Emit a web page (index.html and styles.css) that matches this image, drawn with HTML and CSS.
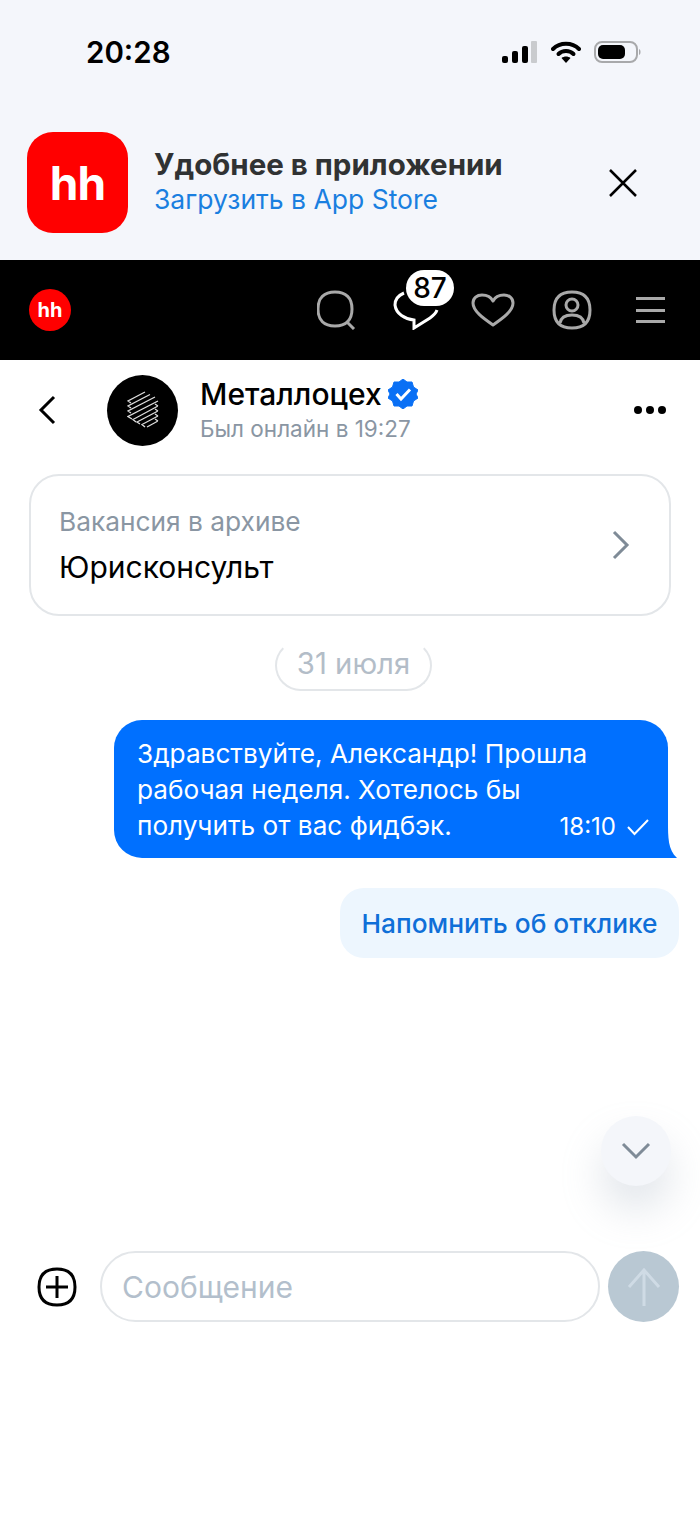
FILE: index.html
```html
<!DOCTYPE html>
<html lang="ru">
<head>
    <meta charset="UTF-8">
    <meta name="viewport" content="width=device-width, initial-scale=1.0">
    <title>Чат</title>
    <link rel="stylesheet" href="styles.css">
</head>
<body>
    <!-- Статус-бар и баннер приложения -->
    <div class="top-area">
        <div class="status-bar">
            <span class="status-time">20:28</span>
            <div class="status-icons">
                <svg width="36" height="22" viewBox="0 0 36 22">
                    <rect x="0" y="15" width="6" height="7" rx="2" fill="#000"/>
                    <rect x="10" y="10" width="6" height="12" rx="2" fill="#000"/>
                    <rect x="20" y="5" width="6" height="17" rx="2" fill="#000"/>
                    <rect x="29" y="0" width="6" height="22" rx="1" fill="#c9cbce"/>
                </svg>
                <svg width="30" height="22" viewBox="0 0 30 22">
                    <path d="M2 8 C9 1 21 1 28 8" fill="none" stroke="#000" stroke-width="4" stroke-linecap="round"/>
                    <path d="M7.500 13 C11.500 9 18.500 9 22.500 13" fill="none" stroke="#000" stroke-width="4" stroke-linecap="round"/>
                    <path d="M10.500 17 C13 15 17 15 19.500 17 L15 22 Z" fill="#000"/>
                </svg>
                <svg width="48" height="22" viewBox="0 0 48 22">
                    <rect x="1" y="1" width="42" height="20" rx="7" fill="none" stroke="#a8a9ab" stroke-width="2"/>
                    <rect x="4" y="4" width="27" height="14" rx="5" fill="#000"/>
                    <path d="M45 8 C47 8.500 47 13.500 45 14 Z" fill="#a8a9ab"/>
                </svg>
            </div>
        </div>

        <div class="app-banner">
            <div class="app-icon">hh</div>
            <div class="app-text">
                <div class="app-title">Удобнее в приложении</div>
                <div class="app-link">Загрузить в App Store</div>
            </div>
            <svg class="app-close" width="30" height="30" viewBox="0 0 30 30">
                <path d="M2 2 L28 28 M28 2 L2 28" stroke="#000" stroke-width="2.500" fill="none"/>
            </svg>
        </div>
    </div>

    <!-- Чёрная навигация сайта -->
    <nav class="site-nav">
        <div class="site-logo">hh</div>
        <div class="nav-icons">
            <svg class="nav-search" width="40" height="40" viewBox="0 0 40 40">
                <path d="M18 2 C29 2 35 8 35 19 C35 30 29 36 18 36 C7 36 1 30 1 19 C1 8 7 2 18 2 Z M29 31 L37 39" fill="none" stroke="#a9a9a9" stroke-width="3"/>
            </svg>
            <div class="nav-chat">
                <svg width="48" height="40" viewBox="0 0 48 40">
                    <path d="M11 3 C4 6 2 11 2 15 C3 24 12 29 21 30 L21 38 L37 28 C41 25 43 23 44 20" fill="none" stroke="#fff" stroke-width="3"/>
                </svg>
                <span class="nav-badge">87</span>
            </div>
            <svg class="nav-heart" width="44" height="34" viewBox="0 0 44 34">
                <path d="M22 32 C12 25 2 18 2 10 C2 5 6 2 11 2 C16 2 20 4 22 8 C24 4 28 2 33 2 C38 2 42 5 42 10 C42 18 32 25 22 32 Z" fill="none" stroke="#a9a9a9" stroke-width="3" stroke-linejoin="round"/>
            </svg>
            <svg class="nav-profile" width="40" height="40" viewBox="0 0 40 40">
                <path d="M20 2 C32 2 38 8 38 20 C38 32 32 38 20 38 C8 38 2 32 2 20 C2 8 8 2 20 2 Z" fill="none" stroke="#a9a9a9" stroke-width="3"/>
                <circle cx="20" cy="15" r="6" fill="none" stroke="#a9a9a9" stroke-width="3"/>
                <path d="M8 33 C9 27 14 25 20 25 C26 25 31 27 32 33" fill="none" stroke="#a9a9a9" stroke-width="3"/>
            </svg>
            <div class="nav-burger"><i></i><i></i><i></i></div>
        </div>
    </nav>

    <!-- Шапка чата -->
    <header class="chat-header">
        <svg class="back-icon" width="18" height="30" viewBox="0 0 18 30">
            <path d="M16 2 L3 15 L16 28" fill="none" stroke="#000" stroke-width="3"/>
        </svg>
        <div class="avatar">
            <svg width="32" height="38" viewBox="0 0 32 38">
                <path d="M18 1 L1 10 L4 12 M23 3.500 L1 15 L4 17 M28 6 L1 20 L4 22 M31 10 L1 25.500 L5 28 M31 15 L6 28.500 L9 31 M31 20 L10 31 L13 33 M31 25 L15 33.500 L18 36 M31 30 L20 36 M31 15 L28 13 M31 20 L28 18 M31 25 L28 23 M31 30 L28 28" fill="none" stroke="#dcdcdc" stroke-width="1.300"/>
            </svg>
        </div>
        <div class="chat-info">
            <div class="chat-name">
                Металлоцех
                <svg width="30" height="30" viewBox="0 0 30 30">
                    <path d="M15 0 L19 3 L24 3 L25.500 8 L30 11 L28 15 L30 19 L25.500 22 L24 27 L19 27 L15 30 L11 27 L6 27 L4.500 22 L0 19 L2 15 L0 11 L4.500 8 L6 3 L11 3 Z" fill="#0a70f5" stroke="#0a70f5" stroke-width="1" stroke-linejoin="round"/>
                    <path d="M8.500 15 L13 20 L22 10.500" fill="none" stroke="#fff" stroke-width="3"/>
                </svg>
            </div>
            <div class="chat-status">Был онлайн в 19:27</div>
        </div>
        <div class="more-dots"><i></i><i></i><i></i></div>
    </header>

    <!-- Карточка вакансии -->
    <div class="vacancy-card">
        <div>
            <div class="vacancy-label">Вакансия в архиве</div>
            <div class="vacancy-title">Юрисконсульт</div>
        </div>
        <svg width="18" height="30" viewBox="0 0 18 30">
            <path d="M2 2 L15 15 L2 28" fill="none" stroke="#7f8b97" stroke-width="3"/>
        </svg>
    </div>

    <div class="date-row"><span class="date-pill">31 июля</span></div>

    <!-- Сообщения -->
    <div class="messages">
        <div class="bubble">
            <div class="bubble-text">Здравствуйте, Александр! Прошла<br>рабочая неделя. Хотелось бы<br>получить от вас фидбэк.</div>
            <div class="bubble-meta">
                <span>18:10</span>
                <svg width="24" height="18" viewBox="0 0 24 18">
                    <path d="M2 9 L8.500 16 L22 2" fill="none" stroke="#fff" stroke-width="2"/>
                </svg>
            </div>
            <svg class="bubble-tail" width="24" height="36" viewBox="0 0 24 36">
                <path d="M0 0 L15 0 C15 15 15 28 24 36 L0 36 Z" fill="#0070ff"/>
            </svg>
        </div>
        <button class="remind-button">Напомнить об отклике</button>
    </div>

    <!-- Кнопка вниз и поле ввода -->
    <div class="composer-area">
        <div class="scroll-down">
            <svg width="30" height="18" viewBox="0 0 30 18">
                <path d="M2 2 L15 15 L28 2" fill="none" stroke="#7f8b97" stroke-width="3"/>
            </svg>
        </div>
        <div class="composer">
            <svg class="plus-icon" width="40" height="40" viewBox="0 0 40 40">
                <path d="M20 2 C32 2 38 8 38 20 C38 32 32 38 20 38 C8 38 2 32 2 20 C2 8 8 2 20 2 Z" fill="none" stroke="#000" stroke-width="3"/>
                <path d="M20 9 V31 M9 20 H31" stroke="#000" stroke-width="3"/>
            </svg>
            <div class="message-input">Сообщение</div>
            <div class="send-button">
                <svg width="34" height="38" viewBox="0 0 34 38">
                    <path d="M17 38 V2 M2 19 L17 2 L32 19" fill="none" stroke="#cfdbe5" stroke-width="3"/>
                </svg>
            </div>
        </div>
    </div>
</body>
</html>
```

FILE: styles.css
```css
* {
    box-sizing: border-box;
}

html, body {
    margin: 0;
    padding: 0;
}

body {
    position: relative;
    width: 700px;
    height: 1518px;
    overflow: hidden;
    background-color: #fff;
    color: #000;
    font-family: "Inter", "Noto Sans", sans-serif;
}

/* Верхняя светлая область */
.top-area {
    height: 260px;
    background-color: #f4f6fb;
}

.status-bar {
    height: 104px;
    padding: 0 58px 0 86px;
    display: flex;
    align-items: center;
    justify-content: space-between;
}

.status-time {
    font-size: 29.500px;
    font-weight: 600;
}

.status-icons {
    display: flex;
    align-items: center;
    gap: 13px;
}

.app-banner {
    display: flex;
    align-items: center;
    padding: 28px 62px 0 27px;
}

.app-icon {
    width: 101px;
    height: 101px;
    border-radius: 26px;
    background-color: #ff0000;
    color: #fff;
    font-size: 46px;
    font-weight: 700;
    letter-spacing: -1px;
    display: flex;
    align-items: center;
    justify-content: center;
}

.app-text {
    margin-left: 26px;
    flex: 1;
}

.app-title {
    font-size: 29.500px;
    font-weight: 700;
    line-height: 36px;
    margin-top: -4px;
    color: #303233;
}

.app-link {
    font-size: 26.500px;
    line-height: 34px;
    color: #1a7fe0;
}

/* Чёрная навигация */
.site-nav {
    height: 100px;
    background-color: #000;
    display: flex;
    align-items: center;
    justify-content: space-between;
    padding: 0 35px 0 29px;
}

.site-logo {
    width: 42px;
    height: 42px;
    border-radius: 50%;
    background-color: #f00;
    color: #fff;
    font-size: 20px;
    font-weight: 700;
    display: flex;
    align-items: center;
    justify-content: center;
}

.nav-icons {
    display: flex;
    align-items: center;
}

.nav-search {
    margin-right: 36px;
}

.nav-chat {
    position: relative;
    width: 48px;
    height: 40px;
    margin-right: 30px;
}

.nav-chat svg {
    display: block;
}

.nav-badge {
    position: absolute;
    left: 13px;
    top: -20px;
    width: 48px;
    height: 36px;
    border-radius: 18px;
    background-color: #fff;
    color: #000;
    font-size: 28px;
    font-weight: 500;
    line-height: 36px;
    text-align: center;
}

.nav-heart {
    margin-right: 37px;
}

.nav-profile {
    margin-right: 44px;
}

.nav-burger {
    width: 29px;
    display: flex;
    flex-direction: column;
    gap: 8.500px;
}

.nav-burger i {
    display: block;
    height: 3px;
    background-color: #a9a9a9;
}

/* Шапка чата */
.chat-header {
    height: 100px;
    display: flex;
    align-items: center;
    padding: 0 34px 0 38px;
}

.back-icon {
    margin-right: 51px;
}

.avatar {
    width: 71px;
    height: 71px;
    border-radius: 50%;
    background-color: #000;
    display: flex;
    align-items: center;
    justify-content: center;
}

.chat-info {
    flex: 1;
    margin-left: 22px;
}

.chat-name {
    display: flex;
    align-items: center;
    gap: 6px;
    font-size: 30px;
    font-weight: 500;
    line-height: 36px;
    padding-top: 1px;
}

.chat-status {
    font-size: 22.500px;
    line-height: 32px;
    margin-top: 1px;
    color: #8a96a3;
}

.more-dots {
    display: flex;
    gap: 4px;
}

.more-dots i {
    display: block;
    width: 8px;
    height: 8px;
    border-radius: 50%;
    background-color: #000;
}

/* Карточка вакансии */
.vacancy-card {
    margin: 14px 29px 0;
    height: 142px;
    border: 2px solid #e3e6e9;
    border-radius: 30px;
    display: flex;
    align-items: center;
    justify-content: space-between;
    padding: 0 39px 0 28px;
}

.vacancy-label {
    font-size: 26.300px;
    line-height: 34px;
    color: #8a96a3;
}

.vacancy-title {
    font-size: 30px;
    line-height: 38px;
    margin-top: 9px;
}

.date-row {
    display: flex;
    justify-content: center;
    margin-top: 24px;
    padding-left: 7px;
}

.date-pill {
    width: 157px;
    height: 51px;
    border: 2px solid #e3e6e9;
    border-top-color: transparent;
    border-radius: 26px;
    text-align: center;
    font-size: 29.300px;
    line-height: 43px;
    color: #b3bdc8;
}

/* Сообщения */
.messages {
    display: flex;
    flex-direction: column;
    align-items: flex-end;
    padding: 29px 21px 0 0;
}

.bubble {
    position: relative;
    width: 554px;
    height: 138px;
    margin-right: 11px;
    padding: 16px 23px;
    background-color: #0070ff;
    border-radius: 28px 28px 0 28px;
    color: #fff;
    font-size: 26.200px;
    line-height: 36px;
}

.bubble-meta {
    position: absolute;
    right: 18px;
    bottom: 15px;
    display: flex;
    align-items: center;
    gap: 10px;
    font-size: 24px;
    line-height: 32px;
}

.bubble-tail {
    position: absolute;
    right: -9px;
    bottom: 0;
}

.remind-button {
    margin-top: 30px;
    width: 339px;
    height: 70px;
    border: none;
    border-radius: 24px;
    background-color: #edf6fe;
    color: #0f6fd8;
    font-family: inherit;
    font-size: 26.300px;
    font-weight: 500;
    text-align: center;
    padding: 0;
}

/* Низ страницы */
.composer-area {
    position: relative;
    padding-top: 293px;
}

.scroll-down {
    position: absolute;
    top: 158px;
    right: 29px;
    width: 70px;
    height: 70px;
    border-radius: 50%;
    background-color: #f4f6fa;
    box-shadow: 0 24px 40px rgba(160, 172, 190, 0.3);
    display: flex;
    align-items: center;
    justify-content: center;
}

.composer {
    display: flex;
    align-items: center;
    padding: 0 21px 0 37px;
}

.plus-icon {
    margin-right: 23px;
}

.message-input {
    width: 500px;
    height: 71px;
    border: 2px solid #e3e6e9;
    border-radius: 36px;
    padding-left: 20px;
    font-size: 30px;
    line-height: 69px;
    color: #b3bfcc;
}

.send-button {
    width: 71px;
    height: 71px;
    margin-left: 8px;
    border-radius: 50%;
    background-color: #b9c8d3;
    display: flex;
    align-items: center;
    justify-content: center;
}
```
